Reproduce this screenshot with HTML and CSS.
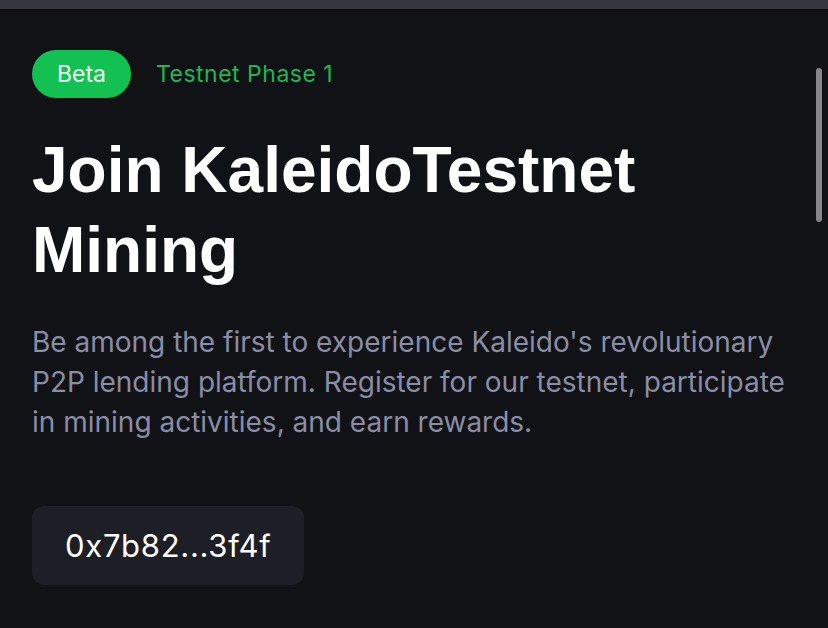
FILE: index.html
```html
<!DOCTYPE html>
<html lang="en">
<head>
<meta charset="utf-8">
<title>Kaleido Testnet Mining</title>
<link rel="stylesheet" href="styles.css">
</head>
<body>
<div class="topbar"></div>
<main class="hero">
  <div class="tags">
    <span class="badge">Beta</span>
    <span class="phase">Testnet Phase 1</span>
  </div>
  <h1 class="title">Join KaleidoTestnet Mining</h1>
  <p class="lead">Be among the first to experience Kaleido's revolutionary P2P lending platform. Register for our testnet, participate in mining activities, and earn rewards.</p>
  <button class="wallet" type="button">0x7b82...3f4f</button>
</main>
<div class="scrollbar"></div>
</body>
</html>
```
FILE: styles.css
```css
html, body {
  margin: 0;
  padding: 0;
  background: #111216;
  height: 100%;
  overflow: hidden;
}
body {
  font-family: Inter, "Noto Sans", sans-serif;
  color: #ffffff;
}
.topbar {
  height: 9px;
  background: #34373b;
  border-bottom: 1px solid #0b0c0e;
}
.hero {
  padding: 40px 32px 0 32px;
  width: 770px;
}
.tags {
  display: flex;
  align-items: center;
  gap: 25px;
}
.badge {
  display: inline-flex;
  align-items: center;
  justify-content: center;
  height: 48px;
  width: 99px;
  border-radius: 24px;
  background: #12c152;
  color: #f2fff6;
  font-size: 23px;
}
.phase {
  color: #20b655;
  font-size: 23px;
  letter-spacing: 0.5px;
}
.title {
  margin: 32px 0 0 0;
  font-family: "Liberation Sans", Arial, sans-serif;
  font-weight: 700;
  font-size: 64px;
  line-height: 80px;
  letter-spacing: 0;
  width: 650px;
}
.lead {
  margin: 32px 0 0 0;
  color: #8a8da6;
  font-size: 28px;
  line-height: 40px;
  width: 770px;
}
.wallet {
  margin-top: 64px;
  display: inline-flex;
  align-items: center;
  height: 79px;
  padding: 0 33px;
  border: none;
  border-radius: 12px;
  background: #1e1f26;
  color: #ffffff;
  font-family: Inter, "Noto Sans", sans-serif;
  font-size: 31px;
  letter-spacing: 0.7px;
}
.scrollbar {
  position: absolute;
  left: 816px;
  top: 68px;
  width: 6px;
  height: 154px;
  border-radius: 3px;
  background: #86868b;
}
```
